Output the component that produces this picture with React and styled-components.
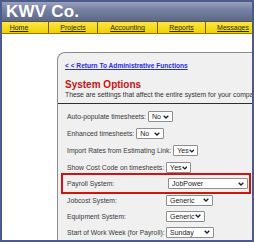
import React from 'react';
import styled, { createGlobalStyle } from 'styled-components';

const GlobalStyle = createGlobalStyle`
    html, body { margin: 0; padding: 0; background: #ffffff; }
    body { font-family: "Liberation Sans", Arial, sans-serif; }
`;

const navItems = [
    { label: 'Home', width: 34, pad: 12 },
    { label: 'Projects', width: 48 },
    { label: 'Accounting', width: 59 },
    { label: 'Reports', width: 47 },
    { label: 'Messages', width: 54 },
    { label: '', width: 20 },
];

const inlineRows = [
    { label: 'Auto-populate timesheets:', value: 'No', width: 25 },
    { label: 'Enhanced timesheets:', value: 'No', width: 28 },
    { label: 'Import Rates from Estimating Link:', value: 'Yes', width: 25 },
    { label: 'Show Cost Code on timesheets:', value: 'Yes', width: 25 },
];

const tableRows = [
    { label: 'Jobcost System:', value: 'Generic', width: 47 },
    { label: 'Equipment System:', value: 'Generic', width: 39 },
    { label: 'Start of Work Week (for Payroll):', value: 'Sunday', width: 48 },
];

const Chevron = () => (
    <svg width="6" height="4" viewBox="0 0 6 4">
        <path d="M0.7 0.7 L3 3 L5.3 0.7" fill="none" stroke="#222" strokeWidth="1.4" />
    </svg>
);

const Select = ({ value, width }) => (
    <SelectBox $width={width}>
        <span>{value}</span>
        <Chevron />
    </SelectBox>
);

const App = () => {
    return (
        <Frame>
            <GlobalStyle />
            <Header>KWV Co.</Header>
            <Nav>
                {navItems.map((item, i) => (
                    <NavItem key={i} $width={item.width} $pad={item.pad || 0}>
                        {item.label && <a>{item.label}</a>}
                    </NavItem>
                ))}
            </Nav>
            <Card>
                <BackLink>&lt; &lt; Return To Administrative Functions</BackLink>
                <Title>System Options</Title>
                <Subtitle>These are settings that affect the entire system for your company.</Subtitle>
                <Rule />
                <Settings>
                    {inlineRows.map((row) => (
                        <InlineRow key={row.label}>
                            <Label>{row.label}</Label>
                            <Select value={row.value} width={row.width} />
                        </InlineRow>
                    ))}
                    <Highlight>
                        <Label>Payroll System:</Label>
                        <Select value="JobPower" width={80} />
                    </Highlight>
                    {tableRows.map((row) => (
                        <TableRow key={row.label}>
                            <Label>{row.label}</Label>
                            <Select value={row.value} width={row.width} />
                        </TableRow>
                    ))}
                </Settings>
            </Card>
        </Frame>
    );
};

export default App;

const Frame = styled.div`
    box-sizing: border-box;
    width: 254px;
    height: 242px;
    border: 2px solid #4d5b8b;
    overflow: hidden;
    background: #ffffff;
`;

const Header = styled.div`
    height: 19px;
    background: linear-gradient(#9aa2bd 0%, #7a84a6 35%, #5c6789 100%);
    color: #ffffff;
    font-weight: bold;
    font-size: 17px;
    line-height: 19px;
    padding-left: 4px;
    letter-spacing: 0.2px;
`;

const Nav = styled.div`
    display: flex;
    height: 11px;
    border-top: 1px solid #5a5420;
    border-bottom: 1px solid #8a7c10;
    background: linear-gradient(#fbe64a, #f2cf00);
    white-space: nowrap;
`;

const NavItem = styled.div`
    flex: none;
    width: ${p => p.$width}px;
    padding-right: ${p => p.$pad}px;
    border-right: 1px solid #6f6410;
    text-align: center;
    font-size: 7px;
    line-height: 11px;

    a {
        color: #2a2a10;
        text-decoration: underline;
    }
`;

const Card = styled.div`
    margin: 18px 0 0 55px;
    height: 200px;
    background: #f0f0f0;
    border: 1px solid #8c8c8c;
    border-right: none;
    border-top-left-radius: 8px;
    padding-top: 9px;
    white-space: nowrap;
    overflow: hidden;
`;

const BackLink = styled.a`
    display: block;
    margin-left: 7px;
    color: #2a2af0;
    font-weight: bold;
    font-size: 6.6px;
    line-height: 8px;
    text-decoration: underline;
`;

const Title = styled.div`
    margin: 9px 0 0 7px;
    color: #cc1212;
    font-weight: bold;
    font-size: 10px;
    line-height: 11px;
`;

const Subtitle = styled.div`
    margin: 1px 0 0 7px;
    color: #333333;
    font-size: 6.8px;
    line-height: 8px;
`;

const Rule = styled.div`
    margin-top: 4px;
    height: 1px;
    border-top: 1px solid #303030;
`;

const Settings = styled.div`
    display: flex;
    flex-direction: column;
    padding: 3px 0 0 9px;
`;

const Label = styled.span`
    color: #3a3a3a;
    font-size: 6.8px;
`;

const InlineRow = styled.div`
    display: flex;
    align-items: center;
    gap: 2px;
    height: 17px;
`;

const TableRow = styled.div`
    display: grid;
    grid-template-columns: 99px auto;
    align-items: center;
    height: 16px;
    justify-items: start;
`;

const Highlight = styled(TableRow)`
    box-sizing: border-box;
    width: 190px;
    height: 21px;
    margin: -3px 0 -2px -6px;
    padding-left: 4px;
    border: 2px solid #d01414;
    grid-template-columns: 101px auto;
`;

const SelectBox = styled.span`
    box-sizing: border-box;
    display: inline-flex;
    align-items: center;
    justify-content: space-between;
    width: ${p => p.$width}px;
    height: 11px;
    padding: 0 3px 0 3px;
    background: #ffffff;
    border: 1px solid #8f8f8f;
    border-radius: 1px;
    color: #222222;
    font-size: 7px;
`;
